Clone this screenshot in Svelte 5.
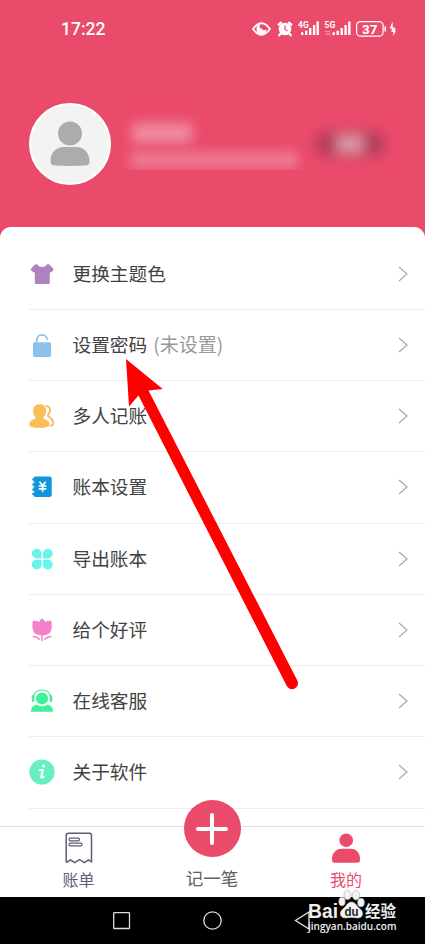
<script lang="ts">
  type Item = {
    icon: string
    label: string
    note?: string
  }

  const items: Item[] = [
    { icon: 'shirt', label: '更换主题色' },
    { icon: 'lock', label: '设置密码', note: '(未设置)' },
    { icon: 'people', label: '多人记账' },
    { icon: 'book', label: '账本设置' },
    { icon: 'clover', label: '导出账本' },
    { icon: 'tulip', label: '给个好评' },
    { icon: 'service', label: '在线客服' },
    { icon: 'info', label: '关于软件' },
  ]
</script>

<div class="screen">
  <header class="status">
    <span class="status__time">17:22</span>
    <svg class="status__icons" width="150" height="20" viewBox="0 0 150 20" fill="#fff" aria-hidden="true">
      <path d="M4 10Q12.500-1.500 21 10Q12.500 21.500 4 10Z" fill="none" stroke="#fff" stroke-width="1.800"></path>
      <path d="M11.500 5.300a5 5 0 1 0 6 5c-2 1.600-4.700 1.200-4.700-1-1.500.6-2.300-.3-2.300-1.300 0-1 .3-2 1-2.700z"></path>
      <circle cx="36" cy="10" r="6.300"></circle>
      <path d="M29.700 5.700L32 3.700M42.300 5.700L40 3.700M31.700 14.500L30.200 16.300M40.300 14.500L41.800 16.300" stroke="#fff" stroke-width="2.200" stroke-linecap="round"></path>
      <path d="M36 6.500V10.500L38.500 12" fill="none" stroke="#eb4d6d" stroke-width="1.200"></path>
      <text x="49" y="8.500" class="status__net">4G</text>
      <path d="M52 13.300h2.400v2.700h-2.400zM56 11.800h2.400v4.200h-2.400zM60 9h2.400v7h-2.400zM63.900 6h2.400v10h-2.400zM67.500 2.500h2.400v13.500h-2.400z"></path>
      <text x="75.500" y="8.500" class="status__net">5G</text>
      <path d="M76 12h5v1.200h-5zM77 14.500h5v1.200h-5z" opacity=".4"></path>
      <path d="M83.500 13.300h2.400v2.700h-2.400zM87.500 11.800h2.400v4.200h-2.400zM91.500 9h2.400v7h-2.400zM95.400 6h2.400v10h-2.400zM99.100 2.500h2.400v13.500h-2.400z"></path>
      <rect x="107.600" y="2.600" width="26.500" height="14.600" rx="4" fill="none" stroke="#fff" stroke-width="1.200"></rect>
      <path d="M135.500 7.500h1.500v5h-1.500z"></path>
      <text x="120.800" y="14.800" class="status__battery">37</text>
      <path d="M143.500 2.500L140.700 9.500H143L142 13.500L146 8.500H143.800ZM144.800 9.500L147 9.500L145.500 12H147L144 17L144.500 13H143Z"></path>
    </svg>
  </header>

  <section class="profile">
    <div class="profile__avatar">
      <svg width="40" height="46" viewBox="0 0 40 46" fill="#acacac" aria-hidden="true">
        <circle cx="20" cy="12.500" r="12"></circle>
        <path d="M14 26h12c8 0 13.500 6 13.500 13.500 0 4-1 5-5 5q-14.500.8-29 0c-4 0-5-1-5-5C.5 32 6 26 14 26z"></path>
      </svg>
    </div>
    <div class="profile__info">
      <div class="smudge smudge--name"></div>
      <div class="smudge smudge--desc"></div>
    </div>
    <div class="profile__badge"><span></span></div>
  </section>

  <main class="panel">
    {#each items as item}
      <div class="row">
        <svg class="row__icon" width="26" height="26" viewBox="0 0 26 26" aria-hidden="true">
          {#if item.icon === 'shirt'}
            <path fill="#ad82bf" d="M8.200 3.300c1.200 2.200 2.800 2.700 4.900 2.700s3.700-.5 4.900-2.700h1.500q.7 0 1.200.5l3.700 4.200q.5.600 0 1.200l-2.500 2.300-1.100-.3v10.200q0 1.600-1.400 1.600H7.200q-1.400 0-1.400-1.600V11.200l-1.100.3-2.800-2.300q-.5-.6 0-1.200l3.800-4.200q.5-.5 1.200-.5z"></path>
          {:else if item.icon === 'lock'}
            <rect x="4" y="10.200" width="18" height="14.700" rx="1.400" fill="#8bc2ea"></rect>
            <path d="M7.700 11V7.600a5.400 5.400 0 0 1 10.700 0V8" fill="none" stroke="#8bc2ea" stroke-width="1.700"></path>
          {:else if item.icon === 'people'}
            <path fill="#fbbd58" d="M10.700 1.200c4 0 6.500 2.700 6.500 6.500 0 2.500-1 4.800-2.700 6.300-.7 1 .1 1.500 1 2 3 1.300 5 2.500 5 5.500 0 2.600-5 3.300-10 3.300S.2 24 .2 21.500c0-3 2-4.200 5.300-5.500 1-.4 1.600-1 .8-2C4.700 12.400 4.100 10.300 4.100 7.800c0-3.900 2.600-6.600 6.600-6.600z"></path>
            <path d="M17.300 3c3.200.5 4.200 3 3.600 5.400-.4 1.700-2.600 2.900-1.800 4.300.9 1.700 4.800 3.200 5.100 6.700.2 2.300-.5 3.200-2.500 3.300" fill="none" stroke="#fbbd58" stroke-width="1.900" stroke-linecap="round"></path>
          {:else if item.icon === 'book'}
            <rect x="4.500" y="2.500" width="18.200" height="20.500" rx="2" fill="#1296db"></rect>
            <path d="M3.300 5.500h3M3.300 10.500h3M3.300 15.500h3M3.300 20h3" stroke="#1296db" stroke-width="2.200"></path>
            <path d="M4.500 8h1M4.500 13h1M4.500 18h1" stroke="#fff" stroke-width="1"></path>
            <path d="M10.500 7.800L13.600 11.600L16.700 7.800M13.600 11.600V17.700M9.800 12H17.400M9.800 14.800H17.400" fill="none" stroke="#fff" stroke-width="1.700"></path>
          {:else if item.icon === 'clover'}
            <path fill="#67f4ec" d="M12.500 12.400H7.800A4.850 4.850 0 1 1 12.500 7.500zM14 12.400V7.500A4.850 4.850 0 1 1 18.700 12.400zM12.500 13.700V18.400A4.850 4.850 0 1 1 7.800 13.700zM14 13.700H18.700A4.850 4.850 0 1 1 14 18.400z"></path>
          {:else if item.icon === 'tulip'}
            <path fill="#f57fca" d="M13.100 1.500c1.500.8 2.500 2 3 3.500 1.900-1.200 3.900-1.400 6.200-1 .7 4 .8 7.500-.7 10.500-1.400 2.600-3.800 3.700-8.500 3.700s-7.100-1.100-8.500-3.700c-1.500-3-1.400-6.500-.7-10.500 2.300-.4 4.300-.2 6.200 1 .5-1.500 1.500-2.700 3-3.500z"></path>
            <path d="M13.100 17V23.500M4.400 19.600q3.800.1 5.900 2.700M21.800 19.600q-3.800.1-5.900 2.700" fill="none" stroke="#f57fca" stroke-width="1.500" stroke-linecap="round"></path>
          {:else if item.icon === 'service'}
            <circle cx="13" cy="10.500" r="6.100" fill="#41f09a"></circle>
            <path d="M4.300 9.500C5 4.600 8.500 2 13 2s8 2.600 8.700 7.500" fill="none" stroke="#41f09a" stroke-width="1.200"></path>
            <path d="M4.100 8.400v4.300M21.900 8.400v4.300" stroke="#41f09a" stroke-width="2.700" stroke-linecap="round"></path>
            <path fill="#41f09a" d="M7.200 16.500q5.800 3.500 11.600 0c3 1 5.200 3.500 5.400 7.200H1.800c.2-3.700 2.400-6.200 5.400-7.200z"></path>
          {:else}
            <circle cx="13" cy="13" r="12.600" fill="#68efbf"></circle>
            <circle cx="14.600" cy="6.900" r="1.600" fill="#fff"></circle>
            <path d="M10.700 11.200Q13.200 10.600 13.900 10.600L12.200 18.200Q12.200 19.300 14.800 17.600" fill="none" stroke="#fff" stroke-width="1.900" stroke-linecap="round" stroke-linejoin="round"></path>
          {/if}
        </svg>
        <span class="row__label">{item.label}</span>
        {#if item.note}
          <span class="row__note">{item.note}</span>
        {/if}
        <svg class="row__chevron" width="10" height="16" viewBox="0 0 10 16" fill="none" stroke="#a8a8a8" stroke-width="1.200" aria-hidden="true">
          <path d="M1 1L9 8L1 15"></path>
        </svg>
      </div>
    {/each}
  </main>

  <nav class="tabs">
    <div class="tab tab--bill">
      <svg width="28" height="32" viewBox="0 0 28 32" fill="none" stroke="#5c5d77" stroke-width="1.500" stroke-linejoin="round" aria-hidden="true">
        <path d="M1.200 30.200V3.500Q1.200 1.200 3.500 1.200H24.500Q26.500 1.200 26.500 3.500V30L23.500 27.800L19.300 30.700L14.500 27.500L9.800 30.700L5.500 27.800L1.200 30.700"></path>
        <rect x="4" y="6.200" width="10.500" height="2.700" rx="1.300" stroke-width="1.200"></rect>
        <rect x="4" y="11.200" width="13" height="2.700" rx="1.300" stroke-width="1.200"></rect>
      </svg>
      <span>账单</span>
    </div>
    <div class="tab tab--add">
      <button class="add" type="button" aria-label="记一笔">
        <svg width="34" height="34" viewBox="0 0 34 34" stroke="#fff" stroke-width="4" stroke-linecap="round" aria-hidden="true">
          <path d="M17 3V31M3 17H31"></path>
        </svg>
      </button>
      <span>记一笔</span>
    </div>
    <div class="tab tab--mine">
      <svg width="28" height="32" viewBox="0 0 28 32" fill="#eb4b6b" aria-hidden="true">
        <circle cx="14.200" cy="8.200" r="6.800"></circle>
        <path d="M9.500 16.800h9.500c5.500 0 9 4.500 9 10 0 3-.4 4-2.500 4h-23C.4 30.800 0 29.800 0 26.800c0-5.500 4-10 9.500-10z"></path>
      </svg>
      <span>我的</span>
    </div>
  </nav>

  <footer class="system">
    <svg width="425" height="47" viewBox="0 0 425 47" fill="none" stroke="#ddd" stroke-width="1.300" aria-hidden="true">
      <rect x="113.700" y="15.700" width="15.800" height="15.800" rx=".5"></rect>
      <circle cx="212.500" cy="23.500" r="8.700"></circle>
      <path d="M309 15V32L295.500 23.500Z"></path>
    </svg>
  </footer>

  <svg class="pointer" width="425" height="944" viewBox="0 0 425 944" aria-hidden="true">
    <path d="M126 359L162.700 389L148.500 390.500L297.300 680.500A5.800 5.800 0 0 1 286.800 686L138.500 395.500L129 406.500Z" fill="#f00"></path>
  </svg>

  <svg class="watermark" width="110" height="50" viewBox="0 0 110 50" aria-hidden="true">
    <text class="watermark__brand" x="4" y="32.500" textLength="30" lengthAdjust="spacingAndGlyphs">Bai</text>
    <g fill="#f4f4f4" stroke="#bbb" stroke-width=".7">
      <ellipse cx="38" cy="16.500" rx="3.100" ry="4.300"></ellipse>
      <ellipse cx="43.500" cy="10" rx="3.500" ry="4.600"></ellipse>
      <ellipse cx="52" cy="10.300" rx="3.700" ry="4.700"></ellipse>
      <ellipse cx="57" cy="17.500" rx="3.300" ry="4.300"></ellipse>
      <path d="M47.500 17c4 0 5 4 8.200 6.500 5 4 3 9.700-2 9.400q-6.200-1-12.400 0c-5 .3-7-5.400-2-9.400 3.200-2.500 4.200-6.500 8.200-6.500z"></path>
    </g>
    <text class="watermark__du" x="40.500" y="31" textLength="14" lengthAdjust="spacingAndGlyphs">du</text>
    <text class="watermark__cn" x="61" y="31.500" textLength="31" lengthAdjust="spacingAndGlyphs">经验</text>
    <text class="watermark__url" x="4" y="44.500" textLength="88.500" lengthAdjust="spacingAndGlyphs">jingyan.baidu.com</text>
  </svg>
</div>

<style>
  :global(body) {
    margin: 0;
    background: #fff;
  }

  .screen {
    position: relative;
    display: flex;
    flex-direction: column;
    width: 425px;
    height: 944px;
    overflow: hidden;
    background: #eb4b6b;
    font-family: 'Noto Sans CJK SC', 'Noto Sans', sans-serif;
  }

  /* Status bar */
  .status {
    display: flex;
    flex-shrink: 0;
    align-items: center;
    justify-content: space-between;
    box-sizing: border-box;
    height: 58px;
    padding: 0 26px 0 61px;
    color: #fff;
  }

  .status__time {
    font-family: Roboto, sans-serif;
    font-size: 17.5px;
    font-weight: 500;
  }

  .status__net {
    font: 700 8.5px Roboto, sans-serif;
  }

  .status__battery {
    font: 700 13.5px Roboto, sans-serif;
    text-anchor: middle;
  }

  /* Profile */
  .profile {
    display: flex;
    flex-shrink: 0;
    align-items: flex-start;
    box-sizing: border-box;
    height: 169px;
    padding: 45px 40px 0 29px;
  }

  .profile__avatar {
    display: flex;
    align-items: center;
    justify-content: center;
    box-sizing: border-box;
    width: 82px;
    height: 82px;
    border: 2.5px solid #fff;
    border-radius: 50%;
    background: #f3f3f3;
  }

  .profile__info {
    width: 182px;
    height: 67px;
    margin-left: 12px;
    overflow: hidden;
  }

  .smudge {
    background: #ee8ba0;
    filter: blur(6px);
  }

  .smudge--name {
    width: 60px;
    height: 20px;
    margin: 20px 0 0 9px;
  }

  .smudge--desc {
    width: 168px;
    height: 16px;
    margin: 9px 0 0 7px;
    background: #ed7d95;
  }

  .profile__badge {
    display: flex;
    align-items: center;
    justify-content: center;
    width: 68px;
    height: 24px;
    margin: 29px 0 0 11px;
    border-radius: 10px;
    background: #ac3955;
    filter: blur(7px);
  }

  .profile__badge span {
    width: 30px;
    height: 18px;
    background: #dba0ac;
  }

  /* Menu */
  .panel {
    flex: 1;
    min-height: 0;
    padding: 11.5px 0 0 29px;
    border-radius: 11px 11px 0 0;
    background: #fff;
  }

  .row {
    display: flex;
    align-items: center;
    box-sizing: border-box;
    height: 71.25px;
    padding-right: 17px;
    border-bottom: 1px solid #ededed;
  }

  .row__icon {
    flex-shrink: 0;
    margin-right: 17.5px;
  }

  .row__label {
    padding-bottom: 2px;
    color: #424242;
    font-size: 18.7px;
    line-height: 28px;
  }

  .row__note {
    margin-left: 6px;
    padding-bottom: 2px;
    color: #999;
    font-size: 19px;
    line-height: 28px;
  }

  .row__chevron {
    margin-left: auto;
  }

  /* Tabs */
  .tabs {
    display: grid;
    flex-shrink: 0;
    grid-template-columns: 157px 110px 158px;
    box-sizing: border-box;
    height: 71px;
    border-top: 1px solid #dedede;
    background: #fff;
  }

  .tab {
    display: flex;
    flex-direction: column;
    align-items: center;
    padding-top: 5px;
    font-size: 16px;
    line-height: 24px;
  }

  .tab span {
    margin-top: 3px;
  }

  .tab--bill {
    color: #5c5d77;
  }

  .tab--add {
    padding-top: 0;
    color: #606060;
    font-size: 17.5px;
  }

  .tab--add span {
    margin-top: 9px;
  }

  .tab--mine {
    color: #eb4b6b;
  }

  .add {
    display: flex;
    flex-shrink: 0;
    align-items: center;
    justify-content: center;
    width: 57px;
    height: 57px;
    margin-top: -27px;
    padding: 0;
    border: none;
    border-radius: 50%;
    background: #eb4b6b;
  }

  .system {
    flex-shrink: 0;
    height: 47px;
    background: #000;
  }

  /* Overlays */
  .pointer {
    position: absolute;
    inset: 0;
    pointer-events: none;
  }

  .watermark {
    position: absolute;
    top: 885px;
    left: 304px;
    fill: #eee;
  }

  .watermark__brand {
    font: 700 19.5px 'Liberation Sans', sans-serif;
  }

  .watermark__du {
    font: 700 12px 'Liberation Sans', sans-serif;
    fill: #222;
  }

  .watermark__cn {
    font: 700 15.5px 'Noto Sans CJK SC', sans-serif;
  }

  .watermark__url {
    font: 600 10px 'Open Sans', sans-serif;
  }
</style>
